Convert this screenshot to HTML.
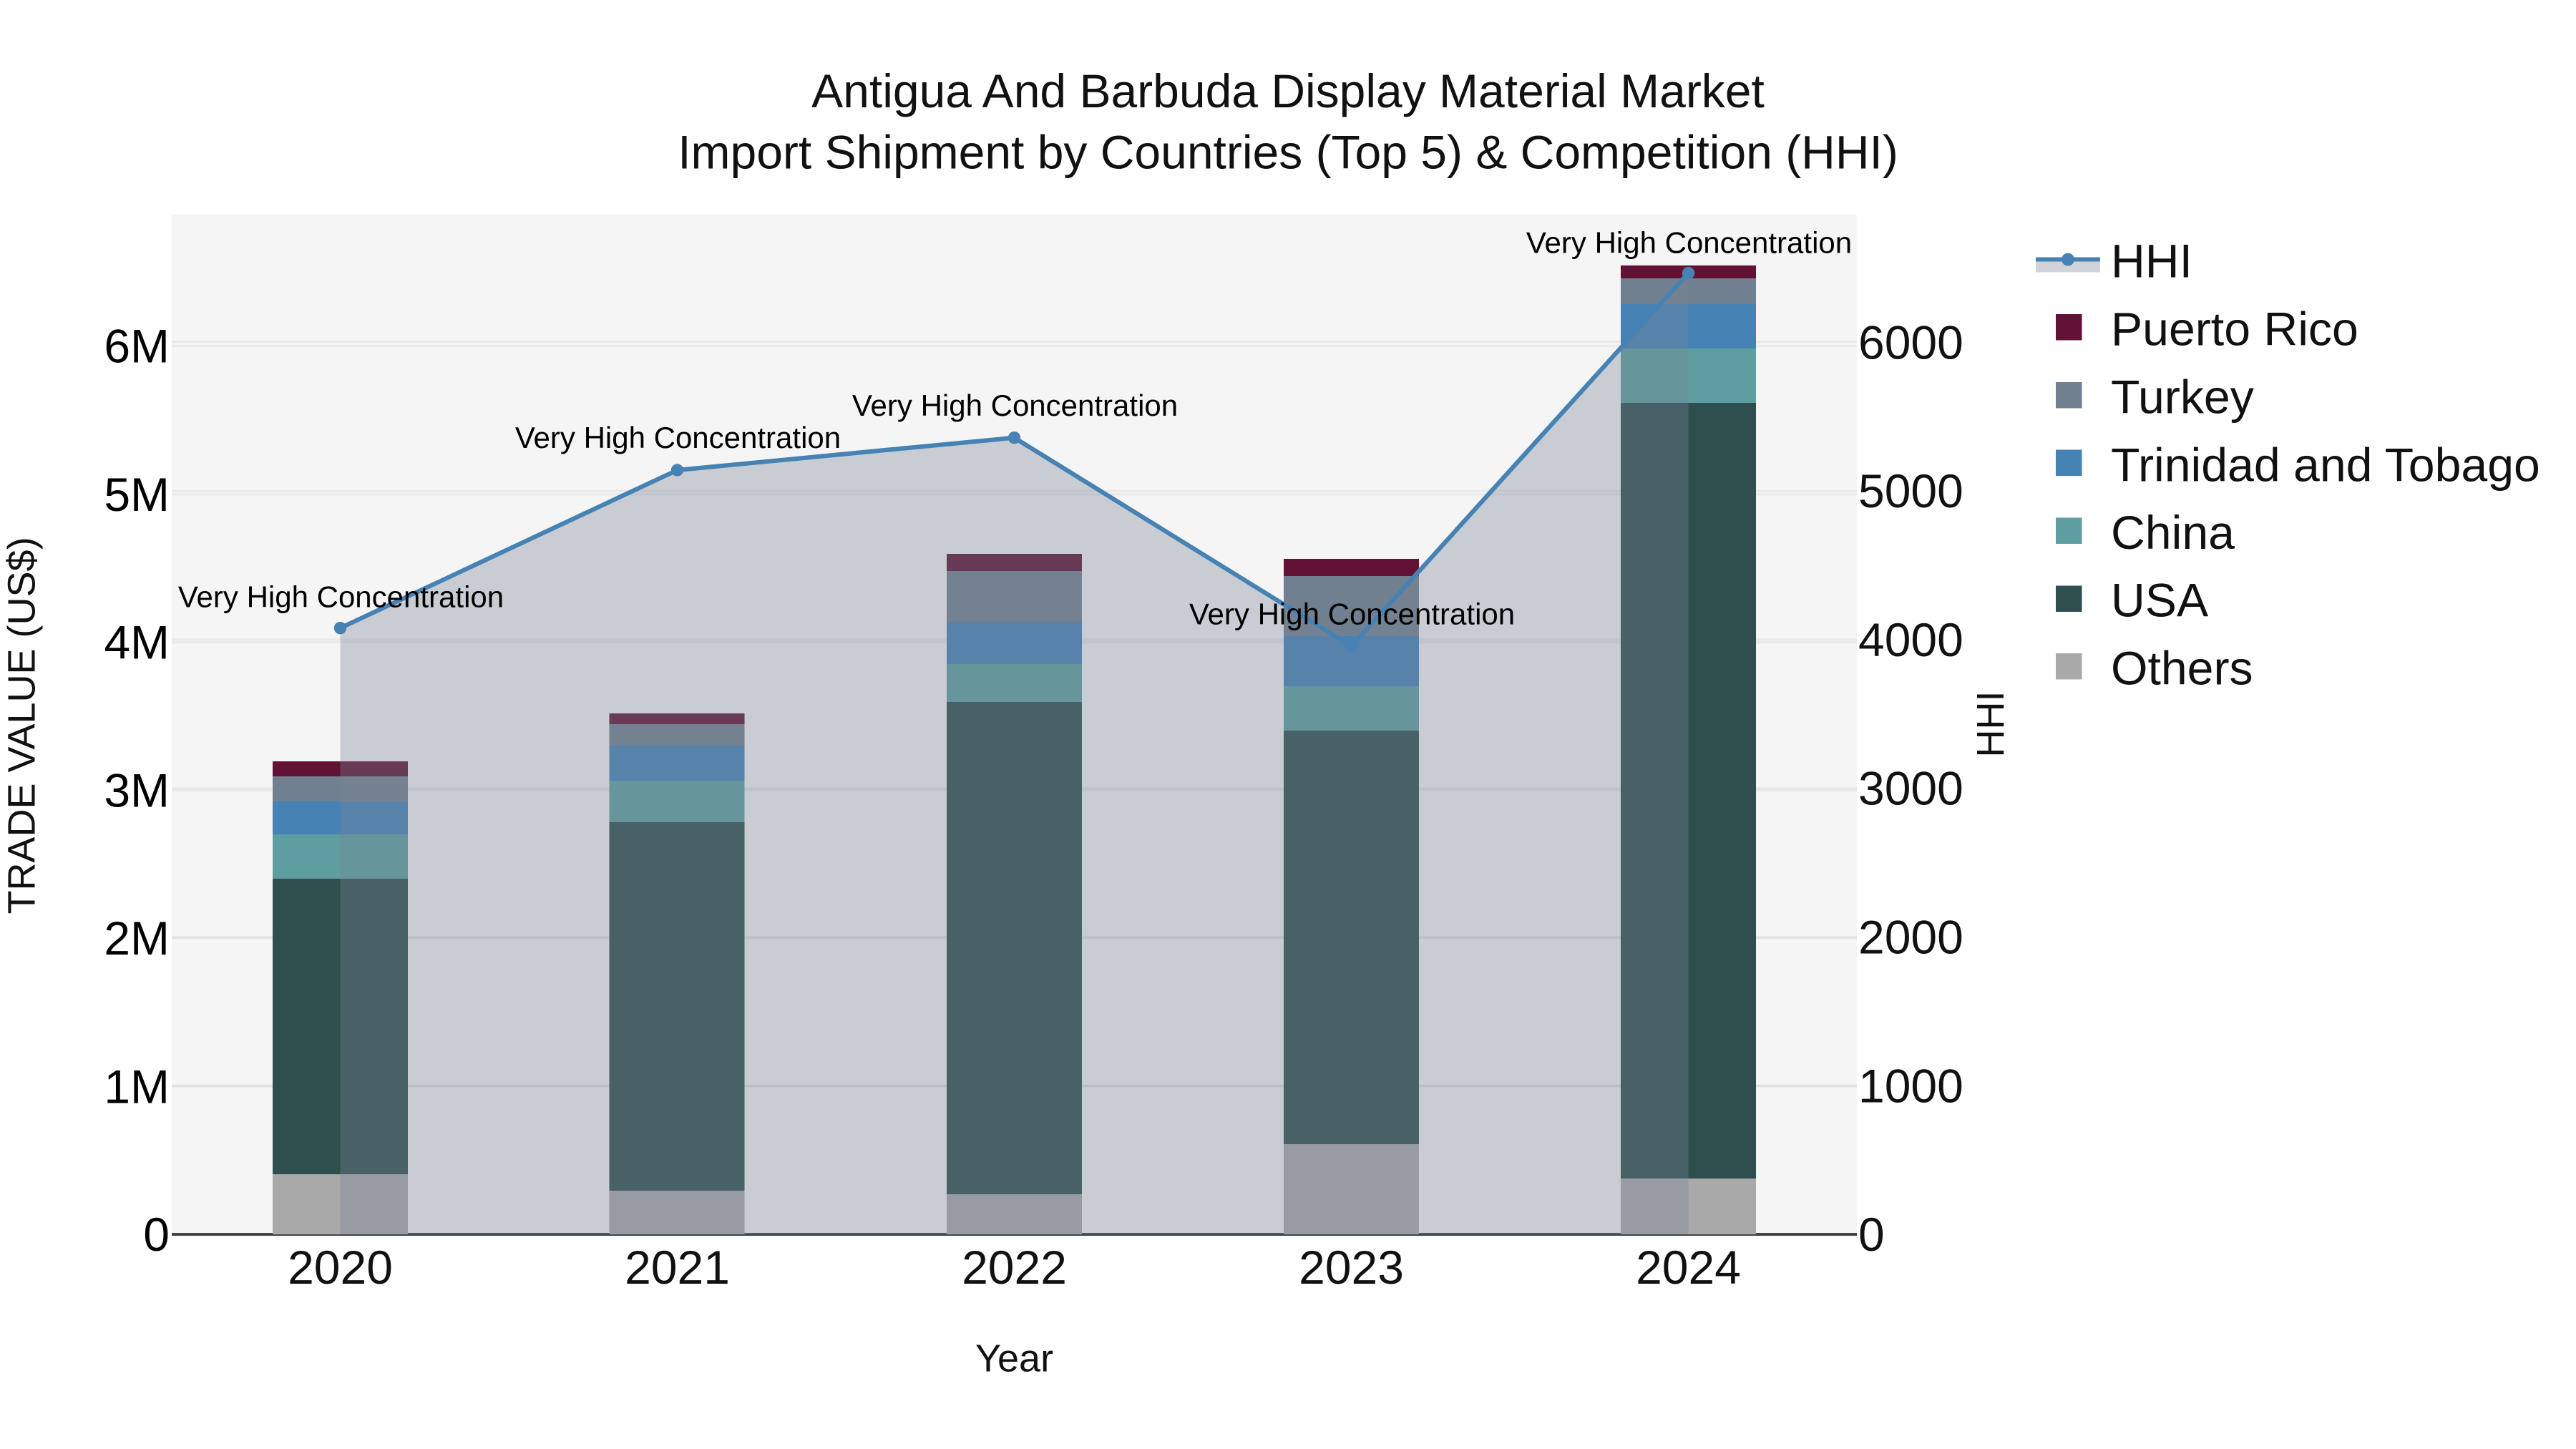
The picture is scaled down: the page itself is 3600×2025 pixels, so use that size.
<!DOCTYPE html>
<html>
<head>
<meta charset="utf-8">
<title>Antigua And Barbuda Display Material Market</title>
<style>
html,body{margin:0;padding:0;background:#fff;width:3600px;height:2025px;overflow:hidden}
svg{display:block}
text{font-family:"Liberation Sans",Arial,sans-serif}
.t{font-size:66px;fill:#111}
.tk{font-size:66px;fill:#000}
.an{font-size:42px;fill:#000;text-anchor:middle}
.lg{font-size:66.2px;fill:#111}
.ax{font-size:54px;fill:#111;text-anchor:middle}
</style>
</head>
<body>
<svg width="3600" height="2025" viewBox="0 0 3600 2025" xmlns="http://www.w3.org/2000/svg">
<rect x="0" y="0" width="3600" height="2025" fill="#fff"/>
<rect x="240" y="300" width="2355" height="1425" fill="#f5f5f5"/>

<!-- grid left axis -->
<g fill="#000" fill-opacity="0.045">
<rect x="240" y="1516.4" width="2355" height="3.4"/>
<rect x="240" y="1309.3" width="2355" height="3.4"/>
<rect x="240" y="1102.6" width="2355" height="3.4"/>
<rect x="240" y="895.9" width="2355" height="3.4"/>
<rect x="240" y="689.1" width="2355" height="3.4"/>
<rect x="240" y="481.8" width="2355" height="3.4"/>
<!-- grid right axis -->
<rect x="240" y="1515.5" width="2355" height="3.4"/>
<rect x="240" y="1307.8" width="2355" height="3.4"/>
<rect x="240" y="1100" width="2355" height="3.4"/>
<rect x="240" y="892.2" width="2355" height="3.4"/>
<rect x="240" y="684.4" width="2355" height="3.4"/>
<rect x="240" y="475.8" width="2355" height="3.4"/>
</g>
<!-- axis line -->
<rect x="240" y="1723" width="2355" height="4" fill="#444"/>

<!-- bars 2020 -->
<g shape-rendering="crispEdges">
<rect x="381" y="1064" width="189" height="21" fill="#621335"/>
<rect x="381" y="1085" width="189" height="35" fill="#708090"/>
<rect x="381" y="1120" width="189" height="46" fill="#4682b4"/>
<rect x="381" y="1166" width="189" height="62" fill="#5f9ea0"/>
<rect x="381" y="1228" width="189" height="413" fill="#2f4f4f"/>
<rect x="381" y="1641" width="189" height="84" fill="#a9a9a9"/>
<!-- 2021 -->
<rect x="851.5" y="997" width="189" height="15" fill="#621335"/>
<rect x="851.5" y="1012" width="189" height="29.7" fill="#708090"/>
<rect x="851.5" y="1041.7" width="189" height="49.3" fill="#4682b4"/>
<rect x="851.5" y="1091" width="189" height="58" fill="#5f9ea0"/>
<rect x="851.5" y="1149" width="189" height="515" fill="#2f4f4f"/>
<rect x="851.5" y="1664" width="189" height="61" fill="#a9a9a9"/>
<!-- 2022 -->
<rect x="1323" y="774" width="189" height="24" fill="#621335"/>
<rect x="1323" y="798" width="189" height="71.3" fill="#708090"/>
<rect x="1323" y="869.3" width="189" height="58.7" fill="#4682b4"/>
<rect x="1323" y="928" width="189" height="53" fill="#5f9ea0"/>
<rect x="1323" y="981" width="189" height="688" fill="#2f4f4f"/>
<rect x="1323" y="1669" width="189" height="56" fill="#a9a9a9"/>
<!-- 2023 -->
<rect x="1794" y="781" width="189" height="24" fill="#621335"/>
<rect x="1794" y="805" width="189" height="84" fill="#708090"/>
<rect x="1794" y="889" width="189" height="70" fill="#4682b4"/>
<rect x="1794" y="959" width="189" height="62" fill="#5f9ea0"/>
<rect x="1794" y="1021" width="189" height="578" fill="#2f4f4f"/>
<rect x="1794" y="1599" width="189" height="126" fill="#a9a9a9"/>
<!-- 2024 -->
<rect x="2265" y="371" width="189" height="18" fill="#621335"/>
<rect x="2265" y="389" width="189" height="36" fill="#708090"/>
<rect x="2265" y="425" width="189" height="62" fill="#4682b4"/>
<rect x="2265" y="487" width="189" height="76" fill="#5f9ea0"/>
<rect x="2265" y="563" width="189" height="1084" fill="#2f4f4f"/>
<rect x="2265" y="1647" width="189" height="78" fill="#a9a9a9"/>
</g>

<!-- HHI area + line -->
<polygon points="475.5,1725 475.5,877.7 946.5,657 1417.5,611.7 1888.5,903 2359.5,381.7 2359.5,1725" fill="rgb(121,131,150)" fill-opacity="0.35"/>
<polyline points="475.5,877.7 946.5,657 1417.5,611.7 1888.5,903 2359.5,381.7" fill="none" stroke="#4682b4" stroke-width="6.2" stroke-linejoin="round"/>
<g fill="#4682b4">
<circle cx="475.5" cy="877.7" r="8.7"/>
<circle cx="946.5" cy="657" r="8.7"/>
<circle cx="1417.5" cy="611.7" r="8.7"/>
<circle cx="1888.5" cy="903" r="8.7"/>
<circle cx="2359.5" cy="381.7" r="8.7"/>
</g>

<!-- annotations -->
<text class="an" x="476.5" y="848.3">Very High Concentration</text>
<text class="an" x="947.5" y="626">Very High Concentration</text>
<text class="an" x="1418.5" y="581">Very High Concentration</text>
<text class="an" x="1889.5" y="872.5">Very High Concentration</text>
<text class="an" x="2360.5" y="353.5">Very High Concentration</text>

<!-- title -->
<text class="t" x="1800" y="150" text-anchor="middle">Antigua And Barbuda Display Material Market</text>
<text class="t" x="1800" y="235.7" text-anchor="middle">Import Shipment by Countries (Top 5) &amp; Competition (HHI)</text>

<!-- left ticks -->
<g text-anchor="end">
<text class="tk" x="237" y="1748">0</text>
<text class="tk" x="237" y="1541.3">1M</text>
<text class="tk" x="237" y="1334">2M</text>
<text class="tk" x="237" y="1127.3">3M</text>
<text class="tk" x="237" y="920.6">4M</text>
<text class="tk" x="237" y="713.8">5M</text>
<text class="tk" x="237" y="506.5">6M</text>
</g>
<!-- right ticks -->
<g>
<text class="t" x="2597" y="1748">0</text>
<text class="t" x="2597" y="1540.3">1000</text>
<text class="t" x="2597" y="1332.5">2000</text>
<text class="t" x="2597" y="1124.7">3000</text>
<text class="t" x="2597" y="916.9">4000</text>
<text class="t" x="2597" y="709.1">5000</text>
<text class="t" x="2597" y="501.3">6000</text>
</g>
<!-- x ticks -->
<g text-anchor="middle">
<text class="t" x="475.5" y="1794">2020</text>
<text class="t" x="946.5" y="1794">2021</text>
<text class="t" x="1417.5" y="1794">2022</text>
<text class="t" x="1888.5" y="1794">2023</text>
<text class="t" x="2359.5" y="1794">2024</text>
</g>

<!-- axis titles -->
<text class="ax" x="1417.5" y="1916.7">Year</text>
<text class="ax" transform="translate(48.5 1014) rotate(-90)" x="0" y="0">TRADE VALUE (US$)</text>
<text class="ax" transform="translate(2800 1012) rotate(-90)" x="0" y="0">HHI</text>

<!-- legend -->
<rect x="2845" y="362" width="90" height="18.5" fill="rgb(121,131,150)" fill-opacity="0.35"/>
<rect x="2845" y="359.5" width="90" height="6" fill="#4682b4"/>
<circle cx="2890" cy="362.6" r="9" fill="#4682b4"/>
<g shape-rendering="crispEdges">
<rect x="2873" y="439" width="36.5" height="36.5" fill="#621335"/>
<rect x="2873" y="534" width="36.5" height="36.5" fill="#708090"/>
<rect x="2873" y="628.5" width="36.5" height="36.5" fill="#4682b4"/>
<rect x="2873" y="723.5" width="36.5" height="36.5" fill="#5f9ea0"/>
<rect x="2873" y="818.5" width="36.5" height="36.5" fill="#2f4f4f"/>
<rect x="2873" y="913" width="36.5" height="36.5" fill="#a9a9a9"/>
</g>
<text class="lg" x="2950" y="387.6">HHI</text>
<text class="lg" x="2950" y="482.3">Puerto Rico</text>
<text class="lg" x="2950" y="577.6">Turkey</text>
<text class="lg" x="2950" y="672.5">Trinidad and Tobago</text>
<text class="lg" x="2950" y="767">China</text>
<text class="lg" x="2950" y="861.7">USA</text>
<text class="lg" x="2950" y="956.5">Others</text>
</svg>
</body>
</html>
